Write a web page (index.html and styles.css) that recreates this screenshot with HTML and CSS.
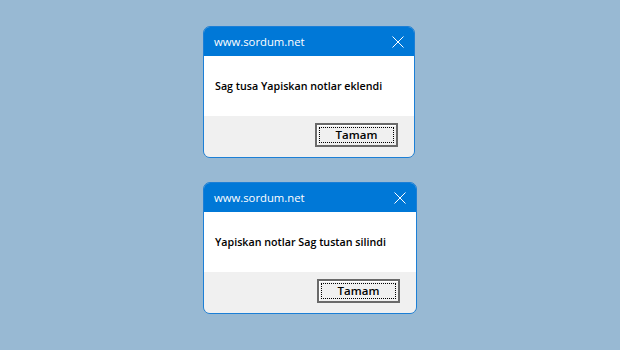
FILE: index.html
```html
<!DOCTYPE html>
<html>
<head>
<meta charset="utf-8">
<link rel="stylesheet" href="styles.css">
</head>
<body>
<div class="stack">
  <div class="dialog d1">
    <div class="titlebar">
      <span class="title">www.sordum.net</span>
      <svg class="close" width="12" height="12" viewBox="0 0 12 12"><path d="M0.5 0.5 L11.5 11.5 M11.5 0.5 L0.5 11.5" stroke="#fff" stroke-width="1" fill="none"/></svg>
    </div>
    <div class="body"><span class="msg">Sag tusa Yapiskan notlar eklendi</span></div>
    <div class="footer"><button class="btn"><span class="focus">Tamam</span></button></div>
  </div>
  <div class="dialog d2">
    <div class="titlebar">
      <span class="title">www.sordum.net</span>
      <svg class="close" width="12" height="12" viewBox="0 0 12 12"><path d="M0.5 0.5 L11.5 11.5 M11.5 0.5 L0.5 11.5" stroke="#fff" stroke-width="1" fill="none"/></svg>
    </div>
    <div class="body"><span class="msg">Yapiskan notlar Sag tustan silindi</span></div>
    <div class="footer"><button class="btn"><span class="focus">Tamam</span></button></div>
  </div>
</div>
</body>
</html>
```
FILE: styles.css
```css
html, body {
  margin: 0;
  padding: 0;
  width: 620px;
  height: 350px;
  background: #98b9d3;
  overflow: hidden;
}
.stack {
  display: flex;
  flex-direction: column;
  align-items: flex-start;
  gap: 24px;
  padding: 26px 0 0 203px;
}
.dialog {
  box-sizing: border-box;
  height: 132px;
  border: 1px solid #1c7fd6;
  border-radius: 7px;
  overflow: hidden;
  display: flex;
  flex-direction: column;
  font-family: "Open Sans", "Noto Sans", sans-serif;
}
.d1 { width: 212px; }
.d2 { width: 214px; }
.titlebar {
  height: 29px;
  background: #0078d7;
  display: flex;
  align-items: center;
  justify-content: space-between;
  padding: 0 10px 0 10px;
}
.title {
  color: #fff;
  font-size: 11.3px;
}
.close { display: block; margin-top: 1px; }
.body {
  height: 60px;
  background: #fff;
  display: flex;
  align-items: center;
  padding-left: 11px;
}
.msg {
  font-size: 10.7px;
  font-weight: 600;
  color: #000;
}
.footer {
  flex: 1;
  background: #f0f0f0;
  display: flex;
  justify-content: flex-end;
  align-items: flex-start;
  padding: 7px 16px 0 0;
}
.btn {
  box-sizing: border-box;
  width: 83px;
  height: 24px;
  padding: 2px;
  margin: 0;
  border: 2px solid #6a6a6a;
  background: #f0f0f0;
  box-shadow: inset 1px 1px 0 #fff;
  display: flex;
}
.focus {
  flex: 1;
  border: 1px dotted #000;
  display: flex;
  align-items: center;
  justify-content: center;
  font-family: "Open Sans", "Noto Sans", sans-serif;
  font-size: 11.5px;
  font-weight: 600;
  color: #000;
  line-height: 1;
}
```
